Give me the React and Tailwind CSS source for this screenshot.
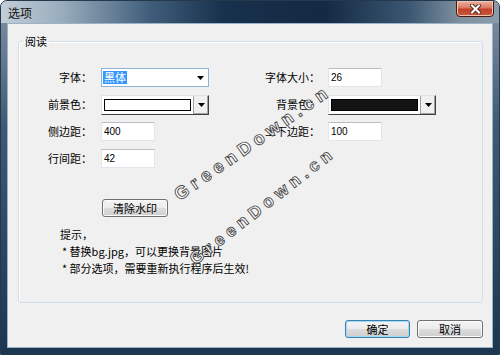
const cjk = "font-['Noto_Sans_CJK_SC',sans-serif]";

function Arrow() {
  return (
    <svg width="7" height="4" viewBox="0 0 7 4">
      <path d="M0 0h7L3.5 4z" fill="#000" />
    </svg>
  );
}

function FontCombo() {
  return (
    <div className="flex h-[19px] w-[108px] items-center border border-[#8db2d8] bg-white pl-[1px] pr-[4px]">
      <span className="bg-[#3399ff] px-[1px] leading-[13px] text-white">黑体</span>
      <span className="ml-auto flex"><Arrow /></span>
    </div>
  );
}

function ColorCombo({ swatch }) {
  return (
    <div className="flex h-[20px] w-[108px] border border-b-[#404040] border-l-[#e3e3e3] border-r-[#404040] border-t-[#e3e3e3] bg-[#f0f0f0] shadow-[inset_-1px_-1px_0_#a0a0a0]">
      <div className="flex flex-1 items-center border-r border-[#a0a0a0] bg-white px-[2px]">
        <div className={`h-[12px] w-full border border-black ${swatch}`} />
      </div>
      <div className="flex w-[14px] items-center justify-center">
        <Arrow />
      </div>
    </div>
  );
}

function TextBox({ value }) {
  return (
    <div className="flex h-[19px] w-[54px] items-center border border-[#e0e6ec] border-t-[#b9bec5] bg-white pl-[2px] font-['Liberation_Sans',sans-serif] text-[10px]">
      {value}
    </div>
  );
}

function Row({ left, leftCtl, right, rightCtl }) {
  return (
    <div className="flex h-[27px] items-center">
      <div className="w-[73px] text-right">{left}</div>
      <div className="ml-[9px] w-[130px]">{leftCtl}</div>
      <div className="w-[89px] text-right">{right}</div>
      <div className="ml-[8px]">{rightCtl}</div>
    </div>
  );
}

function Button({ children, primary = false, className = '' }) {
  const edge = primary
    ? 'border-[#3c7fb1] shadow-[inset_0_0_0_1px_#9fdcf7]'
    : 'border-[#707070] shadow-[inset_0_0_0_1px_#fbfbfb]';
  return (
    <div
      className={`flex h-[18px] items-center justify-center rounded-[3px] border bg-[linear-gradient(#f3f3f3_0%,#ececec_50%,#dcdcdc_51%,#cfcfcf_100%)] ${edge} ${className}`}
    >
      {children}
    </div>
  );
}

function Watermark({ x, y, size, angle }) {
  return (
    <div className="pointer-events-none absolute" style={{ left: x, top: y }}>
      <span
        className="absolute block -translate-x-1/2 -translate-y-1/2 whitespace-nowrap font-['Liberation_Sans',sans-serif] font-bold tracking-[5px] text-white [-webkit-text-stroke:0.9px_#4a4a4a]"
        style={{ fontSize: size, rotate: `${angle}deg` }}
      >
        GreenDown.cn
      </span>
    </div>
  );
}

export default function App() {
  return (
    <div
      className={`relative flex h-[355px] w-[500px] flex-col overflow-hidden rounded-t-[7px] border border-[#26384b] bg-[linear-gradient(#8294a5_0%,#3f5a74_35%,#1c3551_100%)] text-[11px] text-black ${cjk}`}
    >
      <div className="flex h-[22px] shrink-0 bg-[linear-gradient(90deg,#c3ced7_0%,#9aaebe_12%,#3f5d7a_30%,#17304b_45%,#142a44_65%,#3b5772_82%,#7e909f_92%,#8c9caa_100%)]">
        <div className="pl-[7px] pt-[5px] text-[12px] leading-[13px] text-[#111]">选项</div>
        <div className="ml-auto mr-[5px] flex h-[17px] w-[38px] -translate-y-px items-center justify-center rounded-b-[4px] border border-[#4a1a10] bg-[linear-gradient(#eab4a4_0%,#d87a62_45%,#c2402a_55%,#c85a3e_100%)] shadow-[inset_0_0_0_1px_#f2c4b4]">
          <svg width="11" height="10" viewBox="0 0 11 10">
            <path d="M2 1.5l7 7M9 1.5l-7 7" stroke="#5a2a20" strokeWidth="4" strokeLinecap="square" />
            <path d="M2 1.5l7 7M9 1.5l-7 7" stroke="#fff" strokeWidth="2" strokeLinecap="square" />
          </svg>
        </div>
      </div>

      <div className="mx-[6px] mb-[6px] flex flex-1 flex-col border border-[#9bb3c6] bg-[#f0f0f0]">
        <fieldset className="ml-[10px] mr-[9px] mt-[11px] h-[268px] rounded-[3px] border border-[#d3dde5] shadow-[inset_1px_1px_0_#fff]">
          <legend className="ml-[4px] px-[2px] leading-[12px]">阅读</legend>
          <div className="pt-[17px]">
            <Row left="字体：" leftCtl={<FontCombo />} right="字体大小：" rightCtl={<TextBox value="26" />} />
            <Row
              left="前景色："
              leftCtl={<ColorCombo swatch="bg-white" />}
              right="背景色："
              rightCtl={<ColorCombo swatch="bg-[#141414]" />}
            />
            <Row left="侧边距：" leftCtl={<TextBox value="400" />} right="上下边距：" rightCtl={<TextBox value="100" />} />
            <Row left="行间距：" leftCtl={<TextBox value="42" />} />
            <Button className="ml-[83px] mt-[27px] w-[66px]">清除水印</Button>
            <div className="ml-[41px] mt-[9px] leading-[17px]">
              <div>提示，</div>
              <div className="ml-[2px]">* 替换bg.jpg，可以更换背景图片</div>
              <div className="ml-[2px]">* 部分选项，需要重新执行程序后生效!</div>
            </div>
          </div>
        </fieldset>
        <div className="mr-[9px] mt-[17px] flex justify-end gap-[7px]">
          <Button primary className="w-[65px]">确定</Button>
          <Button className="w-[66px]">取消</Button>
        </div>
      </div>

      <Watermark x={252} y={142} size={18} angle={-35} />
      <Watermark x={262} y={205} size={17} angle={-38} />
    </div>
  );
}
